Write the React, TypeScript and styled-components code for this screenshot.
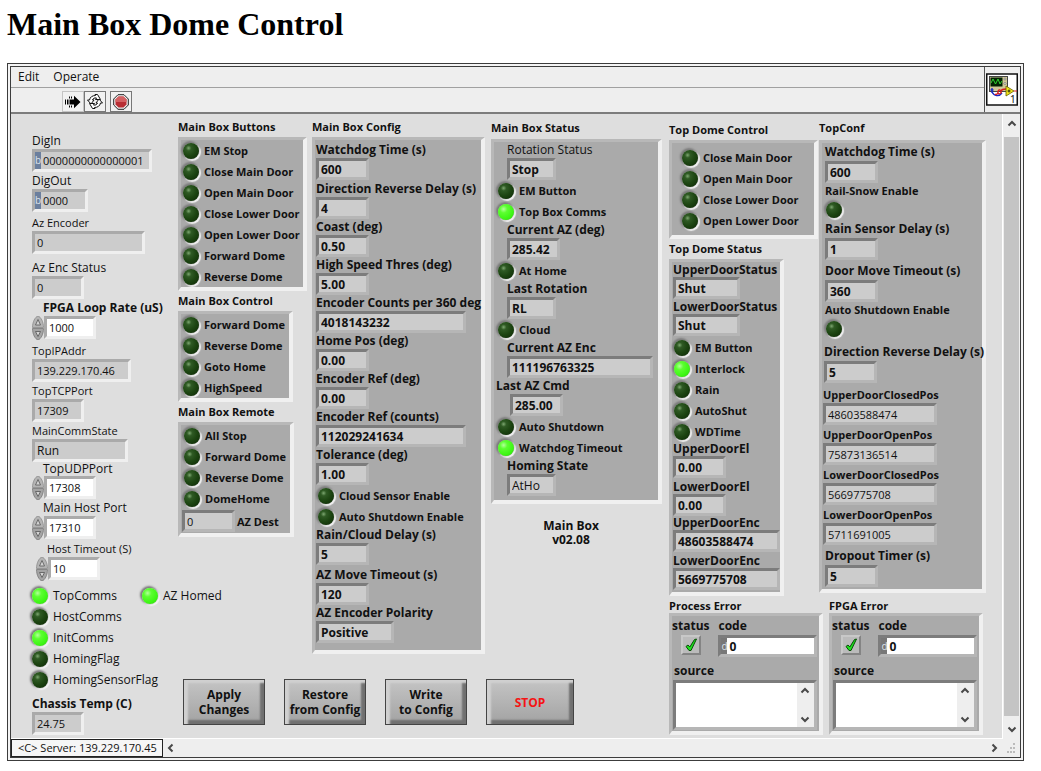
import React, { useId } from "react";
import styled, { createGlobalStyle, css } from "styled-components";

const GlobalStyle = createGlobalStyle`
  * { box-sizing: border-box; }
  body { margin: 0; background: #fff; }
  button, input, textarea { font: inherit; color: inherit; margin: 0; }
`;

const Page = styled.main`
  padding: 6px 17px 9px 7px;
  min-width: 1016px;
  font-family: "Open Sans", "Noto Sans", sans-serif;
  font-size: 12px;
  color: #111;
`;

const PageTitle = styled.h1`
  margin: 0 0 21px;
  font: bold 32px/36px "Liberation Serif", serif;
  color: #000;
`;

const Frame = styled.section`
  border: 1px solid #3c3c3c;
  padding: 2px;
  background: #f4f4f4;
`;

const FrameInner = styled.div`
  border: 1px solid #3c3c3c;
  background: #eee;
`;

const Header = styled.header`
  display: flex;
  border-bottom: 2px solid #7c7c7c;
`;

const HeaderBars = styled.div`
  flex: 1;
`;

const MenuBar = styled.nav`
  display: flex;
  gap: 14px;
  height: 21px;
  padding-left: 7px;
  border-bottom: 1px solid #a0a0a0;
`;

const MenuItem = styled.button`
  border: 0;
  padding: 0;
  background: none;
  line-height: 20px;
`;

const ToolBar = styled.div`
  display: flex;
  height: 24px;
  padding: 3px 0 0 51px;
`;

const ToolButton = styled.button<{ $flat?: boolean; $apart?: boolean }>`
  display: grid;
  place-items: center;
  width: 22px;
  height: 21px;
  padding: 0;
  margin-left: ${(p) => (p.$apart ? 4 : 0)}px;
  border: 1px solid ${(p) => (p.$flat ? "#c4c4c4" : "#777")};
  background: #f1f1f1;
`;

const IconCell = styled.div`
  width: 36px;
  padding: 6px 1px 0;
  border-left: 1px solid #555;
`;

const Body = styled.div`
  display: flex;
`;

const Canvas = styled.div`
  flex: 1;
  min-width: 0;
  display: grid;
  grid-template-columns: minmax(0, 146fr) minmax(0, 491fr) minmax(0, 333fr);
  padding: 0 0 3px 21px;
  background: #dedede;
  border-right: 1px solid #fff;
  border-bottom: 1px solid #fff;
`;

const LeftColumn = styled.div`
  display: flex;
  flex-direction: column;
  padding-top: 19px;
`;

const Section = styled.div`
  display: flex;
  flex-direction: column;
  justify-content: space-between;
`;

const MiddleGrid = styled.div`
  display: grid;
  grid-template-columns: minmax(0, 134fr) minmax(0, 179fr) minmax(0, 178fr);
  padding-top: 3px;
`;

const RightGrid = styled.div`
  display: grid;
  grid-template-columns: minmax(0, 150fr) minmax(0, 183fr);
  padding-top: 6px;
`;

const Stack = styled.div`
  display: flex;
  flex-direction: column;
  align-items: flex-start;
`;

const GroupTitle = styled.h2<{ $tall?: boolean; $raised?: boolean }>`
  margin: 0;
  padding-bottom: ${(p) => (p.$raised ? 4 : 0)}px;
  font-size: 11px;
  font-weight: bold;
  line-height: ${(p) => (p.$tall ? 22 : p.$raised ? 16 : 20)}px;
  white-space: nowrap;
`;

const Panel = styled.div<{ $w: number; $pad?: string }>`
  width: ${(p) => p.$w}px;
  padding: ${(p) => p.$pad ?? "0"};
  background: #aaa;
  border-style: solid;
  border-width: 3px 4px 4px 3px;
  border-color: #b8b8b8 #f0f0f0 #f0f0f0 #b8b8b8;
  font-weight: bold;
`;

const FieldRow = styled.div<{ $gap?: number; $indent?: number }>`
  display: flex;
  flex-direction: column;
  align-items: flex-start;
  margin-top: ${(p) => p.$gap ?? 0}px;
  padding-left: ${(p) => p.$indent ?? 0}px;
`;

const FieldLabel = styled.label<{ $lh: number; $bold?: boolean; $size: number; $indent?: number }>`
  font-size: ${(p) => p.$size}px;
  line-height: ${(p) => p.$lh}px;
  font-weight: ${(p) => (p.$bold ? "bold" : "normal")};
  padding-left: ${(p) => p.$indent ?? 0}px;
  white-space: nowrap;
`;

const sunken = css`
  border-style: solid;
  border-width: 3px;
  border-color: #7c7c7c #b6b6b6 #b6b6b6 #7c7c7c;
`;

const raisedEdge = css`
  border-style: solid;
  border-width: 3px;
  border-color: #aaa #efefef #efefef #aaa;
`;

const ValueShell = styled.div<{ $w: number; $h: number; $light?: boolean; $white?: boolean }>`
  display: flex;
  width: ${(p) => p.$w}px;
  height: ${(p) => p.$h}px;
  ${(p) => (p.$light ? raisedEdge : sunken)}
  background: ${(p) => (p.$white ? "#fff" : "#ccc")};
`;

const ValueInput = styled.input<{ $size: number; $bold?: boolean }>`
  flex: 1;
  min-width: 0;
  height: 100%;
  border: 0;
  padding: 0 0 0 2px;
  outline: 0;
  background: transparent;
  font-size: ${(p) => p.$size}px;
  font-weight: ${(p) => (p.$bold ? "bold" : "normal")};
`;

const Radix = styled.span<{ $dark?: boolean }>`
  width: 6px;
  background: ${(p) => (p.$dark ? "#777" : "#6b7f9e")};
  color: #dde3ec;
  font-size: 10px;
  font-weight: normal;
  line-height: 16px;
`;

const SpinRow = styled.div`
  display: flex;
`;

const Spinner = styled.div`
  display: flex;
  flex-direction: column;
  width: 12px;
`;

const SpinButton = styled.button`
  display: block;
  width: 12px;
  height: 12px;
  padding: 0;
  border: 0;
  background: none;
  line-height: 0;
`;

const LedRow = styled.label<{ $pad?: number; $gap?: number; $size?: number }>`
  display: flex;
  align-items: center;
  height: 21px;
  gap: 5px;
  margin-top: ${(p) => p.$gap ?? 0}px;
  padding-left: ${(p) => p.$pad ?? 2}px;
  font-size: ${(p) => p.$size ?? 11}px;
  white-space: nowrap;
`;

const Led = styled.input`
  appearance: none;
  flex: none;
  width: 16px;
  height: 16px;
  border-radius: 50%;
  background: radial-gradient(circle at 35% 32%, #7da670 0, #2f5a24 18%, #1c4411 52%, #0c2604 100%);
  box-shadow: -1px -1px 2px 1px #7a7a7a, 1px 1px 1px 1px #f6f6f6;
  &:checked {
    background: radial-gradient(circle at 35% 32%, #b4ff9c 0, #5cff30 25%, #3df514 65%, #2fc80e 100%);
  }
`;

const LedPair = styled.div`
  display: grid;
  grid-template-columns: 110px max-content;
`;

const LedGroup = styled.div`
  padding: 4px 0 4px;
`;

const DestRow = styled.label`
  display: flex;
  align-items: center;
  gap: 2px;
  height: 24px;
  padding-left: 1px;
  font-size: 11px;
  white-space: nowrap;
`;

const Version = styled.p`
  align-self: center;
  margin: 15px 18px 0 0;
  font-size: 12px;
  font-weight: bold;
  line-height: 14px;
  text-align: center;
`;

const Actions = styled.div`
  display: flex;
  gap: 19px;
  padding: 0 0 10px 5px;
`;

const ActionButton = styled.button<{ $wide?: boolean; $danger?: boolean }>`
  width: ${(p) => (p.$wide ? 88 : 82)}px;
  height: 46px;
  padding: 0;
  border: 1px solid #444;
  background: linear-gradient(#c4c4c4, #b2b2b2 55%, #a2a2a2);
  box-shadow: inset 4px 3px 2px #d0d0d0, inset -4px -4px 2px #707070;
  font-weight: bold;
  line-height: 15px;
  color: ${(p) => (p.$danger ? "#f51414" : "#111")};
  white-space: nowrap;
`;

const Errors = styled.div`
  display: flex;
  gap: 6px;
`;

const ErrorTitle = styled(GroupTitle)`
  line-height: 14px;
`;

const ErrorTop = styled.div`
  display: flex;
  gap: 9px;
`;

const StatusBox = styled.div`
  display: flex;
  flex-direction: column;
  align-items: center;
  line-height: 19px;
`;

const StatusButton = styled.button`
  display: grid;
  place-items: center;
  width: 20px;
  height: 20px;
  padding: 0;
  border: 2px solid;
  border-color: #c8c8c8 #848484 #848484 #c8c8c8;
  background: #bbb;
`;

const CodeBox = styled.div`
  display: flex;
  flex-direction: column;
  line-height: 19px;
`;

const SourceLabel = styled.label`
  display: block;
  padding: 5px 0 0 2px;
  line-height: 18px;
`;

const SourceShell = styled.div`
  display: flex;
  width: 144px;
  height: 50px;
  margin-left: 1px;
  ${sunken}
  background: #fff;
`;

const SourceText = styled.textarea`
  flex: 1;
  min-width: 0;
  border: 0;
  padding: 0;
  resize: none;
  overflow: hidden;
  outline: 0;
  background: #fff;
`;

const SourceScroll = styled.div`
  display: flex;
  flex-direction: column;
  justify-content: space-between;
  width: 17px;
  background: #eee;
`;

const ArrowButton = styled.button`
  display: grid;
  place-items: center;
  width: 16px;
  height: 16px;
  padding: 0;
  border: 0;
  background: none;
`;

const VScroll = styled.div`
  display: flex;
  flex-direction: column;
  align-items: center;
  width: 17px;
  padding: 2px 0;
`;

const VThumb = styled.div`
  flex: 1;
  width: 15px;
  margin: 5px 0;
  background: #c4c4c4;
`;

const Footer = styled.footer`
  display: flex;
  align-items: center;
  height: 18px;
`;

const Server = styled.div`
  width: 152px;
  height: 18px;
  padding-left: 6px;
  border: 1px solid #222;
  background: #f6f6f6;
  font-size: 11px;
  line-height: 16px;
  white-space: nowrap;
`;

const Spacer = styled.div`
  flex: 1;
`;

function Chevron({ dir }: { dir: "up" | "down" | "left" | "right" }) {
  const paths = {
    up: "M1.5 6.5 5 3 8.5 6.5",
    down: "M1.5 3.5 5 7 8.5 3.5",
    left: "M6.5 1.5 3 5 6.5 8.5",
    right: "M3.5 1.5 7 5 3.5 8.5",
  };
  return (
    <svg width="10" height="10" viewBox="0 0 10 10">
      <path d={paths[dir]} fill="none" stroke="#484848" strokeWidth="2" />
    </svg>
  );
}

type FieldProps = {
  label: string;
  value: string;
  w?: number;
  h?: number;
  lh?: number;
  gap?: number;
  indent?: number;
  labelIndent?: number;
  light?: boolean;
  bold?: boolean;
  boldValue?: boolean;
  size?: number;
  valueSize?: number;
  radix?: string;
  spin?: boolean;
};

function Field({
  label, value, w = 53, h = 22, lh = 16, gap, indent, labelIndent, light,
  bold = true, boldValue = true, size = 12, valueSize = 12, radix, spin,
}: FieldProps) {
  const id = useId();
  const box = (
    <ValueShell $w={w} $h={h} $light={light} $white={spin}>
      {radix && <Radix>{radix}</Radix>}
      <ValueInput id={id} $size={valueSize} $bold={boldValue} defaultValue={value} readOnly={!spin} />
    </ValueShell>
  );
  return (
    <FieldRow $gap={gap} $indent={indent}>
      <FieldLabel htmlFor={id} $lh={lh} $bold={bold} $size={size} $indent={labelIndent}>{label}</FieldLabel>
      {spin ? (
        <SpinRow>
          <Spinner>
            <SpinButton aria-label={`Increase ${label}`}>
              <svg width="12" height="12" viewBox="0 0 12 12">
                <path d="M6 0C9 1 11.5 6 11.5 11.5H.5C.5 6 3 1 6 0Z" fill="#b4b4b4" stroke="#8a8a8a" strokeWidth=".8" />
                <path d="M3.5 9 6 3.5 8.5 9Z" fill="#d4d4d4" stroke="#555" strokeWidth=".8" />
              </svg>
            </SpinButton>
            <SpinButton aria-label={`Decrease ${label}`}>
              <svg width="12" height="12" viewBox="0 0 12 12">
                <path d="M6 12C9 11 11.5 6 11.5 .5H.5C.5 6 3 11 6 12Z" fill="#a4a4a4" stroke="#777" strokeWidth=".8" />
                <path d="M3.5 3.5 6 8.5 8.5 3.5Z" fill="#d4d4d4" stroke="#555" strokeWidth=".8" />
              </svg>
            </SpinButton>
          </Spinner>
          {box}
        </SpinRow>
      ) : box}
    </FieldRow>
  );
}

function Lamp({ label, on, pad, gap, size }: { label: string; on?: boolean; pad?: number; gap?: number; size?: number }) {
  return (
    <LedRow $pad={pad} $gap={gap} $size={size}>
      <Led type="checkbox" checked={!!on} readOnly />
      {label}
    </LedRow>
  );
}

function SideField(p: FieldProps) {
  return <Field lh={16} h={23} light bold={false} boldValue={false} valueSize={11} {...p} />;
}

function SideLamp({ label, on, gap }: { label: string; on?: boolean; gap?: number }) {
  return <Lamp label={label} on={on} gap={gap} pad={0} size={12} />;
}

function DoorField(p: FieldProps) {
  return <Field w={114} size={11} valueSize={11} boldValue={false} gap={2} {...p} />;
}

function BareLamp({ label }: { label: string }) {
  const id = useId();
  return (
    <FieldRow>
      <FieldLabel htmlFor={id} $lh={16} $bold $size={11} $indent={2}>{label}</FieldLabel>
      <LedRow as="div" $pad={3}>
        <Led id={id} type="checkbox" checked={false} readOnly />
      </LedRow>
    </FieldRow>
  );
}

function ErrorCluster({ title }: { title: string }) {
  const code = useId();
  const source = useId();
  return (
    <Stack>
      <ErrorTitle>{title}</ErrorTitle>
      <Panel $w={154} $pad="0 0 1px">
        <ErrorTop>
          <StatusBox>
            <span>status</span>
            <StatusButton aria-label={`${title} status`}>
              <svg width="14" height="14" viewBox="0 0 14 14">
                <path d="M2 8.5 4 7l1.8 2L10.5 1.5 12.5 1 7 12.5H5Z" fill="#1fe01f" stroke="#064d06" strokeWidth="1" />
              </svg>
            </StatusButton>
          </StatusBox>
          <CodeBox>
            <label htmlFor={code}>code</label>
            <ValueShell $w={99} $h={22} $white>
              <Radix $dark>d</Radix>
              <ValueInput id={code} $size={12} $bold defaultValue="0" />
            </ValueShell>
          </CodeBox>
        </ErrorTop>
        <SourceLabel htmlFor={source}>source</SourceLabel>
        <SourceShell>
          <SourceText id={source} />
          <SourceScroll>
            <ArrowButton aria-label="Scroll up"><Chevron dir="up" /></ArrowButton>
            <ArrowButton aria-label="Scroll down"><Chevron dir="down" /></ArrowButton>
          </SourceScroll>
        </SourceShell>
      </Panel>
    </Stack>
  );
}

export default function App() {
  return (
    <Page>
      <GlobalStyle />
      <PageTitle>Main Box Dome Control</PageTitle>
      <Frame>
        <FrameInner>
          <Header>
            <HeaderBars>
              <MenuBar>
                <MenuItem>Edit</MenuItem>
                <MenuItem>Operate</MenuItem>
              </MenuBar>
              <ToolBar>
                <ToolButton $flat aria-label="Run">
                  <svg width="16" height="14" viewBox="0 0 16 14">
                    <path d="M0 4.500h1v5H0zM2 4.500h1.500v5H2zM4.500 4.500H9V.8L15.500 7 9 13.200V9.500H4.500z" fill="#000" />
                    <path d="M4.500 1.500v2M6.500 1.500v2M4.500 10.500v2M6.500 10.500v2" stroke="#000" />
                  </svg>
                </ToolButton>
                <ToolButton aria-label="Run continuously">
                  <svg width="16" height="15" viewBox="0 0 16 15">
                    <path d="M2.500 6C3 3 5.500 1.500 8.500 1.500L8 .5H10.500L13.500 5.500H8.500L9.500 4C7.500 3.500 6 4.500 5.500 6H7L4 10 .5 6Z" fill="#fff" stroke="#111" strokeLinejoin="round" />
                    <path d="M13.500 9C13 12 10.500 13.500 7.500 13.500L8 14.500H5.500L2.500 9.500H7.500L6.500 11C8.500 11.500 10 10.500 10.500 9H9L12 5 15.500 9Z" fill="#fff" stroke="#111" strokeLinejoin="round" />
                  </svg>
                </ToolButton>
                <ToolButton $apart aria-label="Abort">
                  <svg width="16" height="16" viewBox="0 0 16 16">
                    <path d="M5 .7h6L15.300 5v6L11 15.300H5L.7 11V5Z" fill="#eee" stroke="#222" />
                    <path d="M5.500 2.500h5l3 3v5l-3 3h-5l-3-3v-5Z" fill="#b82e34" />
                    <path d="M5.500 2.500h5l3 3V8h-11V5.500Z" fill="#d46062" />
                  </svg>
                </ToolButton>
              </ToolBar>
            </HeaderBars>
            <IconCell>
              <svg width="32" height="33" viewBox="0 0 32 33">
                <rect x=".75" y="1" width="30.500" height="31" fill="#fff" stroke="#111" strokeWidth="1.500" />
                <rect x="3.500" y="3.500" width="18" height="15" fill="#d0c898" stroke="#444" />
                <rect x="4.500" y="4.500" width="12" height="9" fill="#022202" />
                <path d="M5 10 7 6l2.500 5L12 6l2 5 2-3" fill="none" stroke="#2fd32f" />
                <circle cx="19" cy="6" r="1" fill="#fff" stroke="#555" strokeWidth=".6" />
                <circle cx="19" cy="10.500" r="1" fill="#fff" stroke="#555" strokeWidth=".6" />
                <path d="M6 15v5M4.500 17h3M6 19c2 4 7 5 10 1" fill="none" stroke="#1828c8" strokeWidth="1.400" />
                <path d="M9 21c1 1 3 0 3-2s2-3 3-1-2 4-3 2M15 18c1-2 3-2 5-2" fill="none" stroke="#d82020" strokeWidth="1.400" />
                <path d="M20 13v10l8-5Z" fill="#f4e818" stroke="#665c00" strokeWidth=".8" />
                <path d="M21.500 18h3M23 16.500v3" stroke="#111" strokeWidth=".9" />
                <path d="M28 18h3" stroke="#d82020" />
                <text x="24" y="30" fontSize="10" fontFamily="Noto Sans, sans-serif" fill="#111">1</text>
              </svg>
            </IconCell>
          </Header>

          <Body>
            <Canvas>
              <LeftColumn>
                <SideField label="DigIn" value="0000000000000001" w={120} radix="b" />
                <SideField label="DigOut" value="0000" w={56} radix="b" gap={1} />
                <SideField label="Az Encoder" value="0" w={113} gap={3} size={11} />
                <SideField label="Az Enc Status" value="0" w={52} gap={6} />
                <SideField label="FPGA Loop Rate (uS)" value="1000" bold w={52} gap={1} labelIndent={11} spin />
                <SideField label="TopIPAddr" value="139.229.170.46" w={99} gap={3} size={11} />
                <SideField label="TopTCPPort" value="17309" w={52} size={11} gap={1} />
                <SideField label="MainCommState" value="Run" w={96} gap={1} size={11} valueSize={12} />
                <SideField label="TopUDPPort" value="17308" w={52} lh={14} labelIndent={11} spin />
                <SideField label="Main Host Port" value="17310" w={52} labelIndent={11} spin />
                <SideField label="Host Timeout (S)" value="10" w={52} indent={4} labelIndent={11} size={11} spin gap={1} />
                <LedPair>
                  <SideLamp label="TopComms" on gap={4} />
                  <SideLamp label="AZ Homed" on gap={4} />
                </LedPair>
                <SideLamp label="HostComms" />
                <SideLamp label="InitComms" on />
                <SideLamp label="HomingFlag" />
                <SideLamp label="HomingSensorFlag" />
                <SideField label="Chassis Temp (C)" value="24.75" bold w={52} gap={6} />
              </LeftColumn>

              <Section>
                <MiddleGrid>
                  <Stack>
                    <GroupTitle>Main Box Buttons</GroupTitle>
                    <Panel $w={129}>
                      {["EM Stop", "Close Main Door", "Open Main Door", "Close Lower Door", "Open Lower Door", "Forward Dome", "Reverse Dome"].map((t) => (
                        <Lamp key={t} label={t} />
                      ))}
                    </Panel>
                    <GroupTitle>Main Box Control</GroupTitle>
                    <Panel $w={115}>
                      {["Forward Dome", "Reverse Dome", "Goto Home", "HighSpeed"].map((t) => (
                        <Lamp key={t} label={t} />
                      ))}
                    </Panel>
                    <GroupTitle>Main Box Remote</GroupTitle>
                    <Panel $w={116}>
                      {["All Stop", "Forward Dome", "Reverse Dome", "DomeHome"].map((t) => (
                        <Lamp key={t} label={t} pad={3} />
                      ))}
                      <DestRow>
                        <ValueShell $w={53} $h={22}>
                          <ValueInput $size={11} defaultValue="0" readOnly />
                        </ValueShell>
                        AZ Dest
                      </DestRow>
                    </Panel>
                  </Stack>

                  <Stack>
                    <GroupTitle>Main Box Config</GroupTitle>
                    <Panel $w={173} $pad="2px 0 7px 1px">
                      <Field label="Watchdog Time (s)" value="600" />
                      <Field label="Direction Reverse Delay (s)" value="4" gap={1} />
                      <Field label="Coast (deg)" value="0.50" />
                      <Field label="High Speed Thres (deg)" value="5.00" />
                      <Field label="Encoder Counts per 360 deg" value="4018143232" w={150} />
                      <Field label="Home Pos (deg)" value="0.00" />
                      <Field label="Encoder Ref (deg)" value="0.00" />
                      <Field label="Encoder Ref (counts)" value="112029241634" w={150} />
                      <Field label="Tolerance (deg)" value="1.00" />
                      <Lamp label="Cloud Sensor Enable" />
                      <Lamp label="Auto Shutdown Enable" />
                      <Field label="Rain/Cloud Delay (s)" value="5" />
                      <Field label="AZ Move Timeout (s)" value="120" gap={2} />
                      <Field label="AZ Encoder Polarity" value="Positive" w={78} />
                    </Panel>
                  </Stack>

                  <Stack>
                    <GroupTitle $tall>Main Box Status</GroupTitle>
                    <Panel $w={171} $pad="0 0 4px 2px">
                      <Field label="Rotation Status" value="Stop" w={49} indent={11} bold={false} />
                      <Lamp label="EM Button" />
                      <Lamp label="Top Box Comms" on />
                      <Field label="Current AZ (deg)" value="285.42" w={53} indent={11} />
                      <Lamp label="At Home" />
                      <Field label="Last Rotation" value="RL" w={49} indent={11} />
                      <Lamp label="Cloud" />
                      <Field label="Current AZ Enc" value="111196763325" w={146} indent={11} />
                      <FieldRow>
                        <FieldLabel htmlFor="last-az" $lh={16} $bold $size={12}>Last AZ Cmd</FieldLabel>
                        <FieldRow $indent={14}>
                          <ValueShell $w={53} $h={22}>
                            <ValueInput id="last-az" $size={12} $bold defaultValue="285.00" readOnly />
                          </ValueShell>
                        </FieldRow>
                      </FieldRow>
                      <Lamp label="Auto Shutdown" />
                      <Lamp label="Watchdog Timeout" on />
                      <Field label="Homing State" value="AtHo" w={49} indent={11} boldValue={false} />
                    </Panel>
                    <Version>Main Box<br />v02.08</Version>
                  </Stack>
                </MiddleGrid>
                <Actions>
                  <ActionButton>Apply<br />Changes</ActionButton>
                  <ActionButton>Restore<br />from Config</ActionButton>
                  <ActionButton>Write<br />to Config</ActionButton>
                  <ActionButton $wide $danger>STOP</ActionButton>
                </Actions>
              </Section>

              <Section>
                <RightGrid>
                  <Stack>
                    <GroupTitle>Top Dome Control</GroupTitle>
                    <Panel $w={149}>
                      <LedGroup>
                        {["Close Main Door", "Open Main Door", "Close Lower Door", "Open Lower Door"].map((t) => (
                          <Lamp key={t} label={t} pad={10} />
                        ))}
                      </LedGroup>
                    </Panel>
                    <GroupTitle>Top Dome Status</GroupTitle>
                    <Panel $w={115} $pad="1px 0 2px 1px">
                      <Field label="UpperDoorStatus" value="Shut" w={67} lh={14} />
                      <Field label="LowerDoorStatus" value="Shut" w={67} lh={14} gap={1} />
                      <Lamp label="EM Button" gap={1} pad={1} />
                      <Lamp label="Interlock" on pad={1} />
                      <Lamp label="Rain" pad={1} />
                      <Lamp label="AutoShut" pad={1} />
                      <Lamp label="WDTime" pad={1} />
                      <Field label="UpperDoorEl" value="0.00" lh={14} />
                      <Field label="LowerDoorEl" value="0.00" lh={14} gap={2} />
                      <Field label="UpperDoorEnc" value="48603588474" w={107} lh={14} />
                      <Field label="LowerDoorEnc" value="5669775708" w={107} lh={14} gap={2} />
                    </Panel>
                  </Stack>

                  <Stack>
                    <GroupTitle $raised>TopConf</GroupTitle>
                    <Panel $w={167} $pad="0 0 2px 1px">
                      <Field label="Watchdog Time (s)" value="600" lh={18} indent={2} />
                      <BareLamp label="Rail-Snow Enable" />
                      <Field label="Rain Sensor Delay (s)" value="1" lh={18} indent={2} />
                      <Field label="Door Move Timeout (s)" value="360" lh={18} indent={2} gap={2} />
                      <BareLamp label="Auto Shutdown Enable" />
                      <Field label="Direction Reverse Delay (s)" value="5" lh={18} indent={1} gap={4} />
                      <DoorField label="UpperDoorClosedPos" value="48603588474" gap={4} />
                      <DoorField label="UpperDoorOpenPos" value="75873136514" />
                      <DoorField label="LowerDoorClosedPos" value="5669775708" />
                      <DoorField label="LowerDoorOpenPos" value="5711691005" />
                      <Field label="Dropout Timer (s)" value="5" lh={18} indent={2} gap={2} />
                    </Panel>
                  </Stack>
                </RightGrid>
                <Errors>
                  <ErrorCluster title="Process Error" />
                  <ErrorCluster title="FPGA Error" />
                </Errors>
              </Section>
            </Canvas>
            <VScroll>
              <ArrowButton aria-label="Scroll up"><Chevron dir="up" /></ArrowButton>
              <VThumb />
              <ArrowButton aria-label="Scroll down"><Chevron dir="down" /></ArrowButton>
            </VScroll>
          </Body>

          <Footer>
            <Server>&lt;C&gt; Server: 139.229.170.45</Server>
            <ArrowButton aria-label="Scroll left"><Chevron dir="left" /></ArrowButton>
            <Spacer />
            <ArrowButton aria-label="Scroll right"><Chevron dir="right" /></ArrowButton>
            <svg width="18" height="14" viewBox="0 0 18 14">
              <path d="M11 2h2v2h-2zM8 6h2v2H8zM11 6h2v2h-2zM5 10h2v2H5zM8 10h2v2H8zM11 10h2v2h-2z" fill="#bbb" />
            </svg>
          </Footer>
        </FrameInner>
      </Frame>
    </Page>
  );
}
